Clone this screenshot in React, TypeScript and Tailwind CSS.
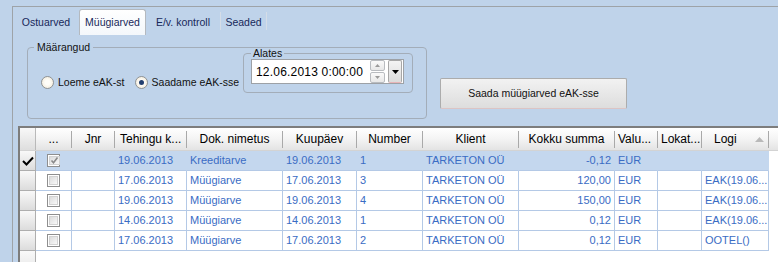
import React from "react";

interface Col {
  key: string;
  title: string;
  w: number;
  head: "center" | "left";
  align: "left" | "right" | "center";
}

const cols: Col[] = [
  { key: "chk", title: "...", w: 36, head: "center", align: "center" },
  { key: "jnr", title: "Jnr", w: 43, head: "center", align: "left" },
  { key: "teh", title: "Tehingu k...", w: 72, head: "left", align: "left" },
  { key: "dok", title: "Dok. nimetus", w: 96, head: "center", align: "left" },
  { key: "kp", title: "Kuupäev", w: 74, head: "center", align: "left" },
  { key: "nr", title: "Number", w: 66, head: "center", align: "left" },
  { key: "kl", title: "Klient", w: 96, head: "center", align: "left" },
  { key: "sum", title: "Kokku summa", w: 96, head: "center", align: "right" },
  { key: "val", title: "Valu...", w: 43, head: "left", align: "left" },
  { key: "lok", title: "Lokat...", w: 44, head: "left", align: "left" },
  { key: "logi", title: "Logi", w: 67, head: "left", align: "left" },
];

type Row = Record<string, string> & { sel?: string };

const rows: Row[] = [
  { sel: "1", jnr: "", teh: "19.06.2013", dok: "Kreeditarve", kp: "19.06.2013", nr: "1", kl: "TARKETON OÜ", sum: "-0,12", val: "EUR", lok: "", logi: "" },
  { jnr: "", teh: "17.06.2013", dok: "Müügiarve", kp: "17.06.2013", nr: "3", kl: "TARKETON OÜ", sum: "120,00", val: "EUR", lok: "", logi: "EAK(19.06..." },
  { jnr: "", teh: "19.06.2013", dok: "Müügiarve", kp: "19.06.2013", nr: "4", kl: "TARKETON OÜ", sum: "150,00", val: "EUR", lok: "", logi: "EAK(19.06..." },
  { jnr: "", teh: "14.06.2013", dok: "Müügiarve", kp: "14.06.2013", nr: "1", kl: "TARKETON OÜ", sum: "0,12", val: "EUR", lok: "", logi: "EAK(19.06..." },
  { jnr: "", teh: "17.06.2013", dok: "Müügiarve", kp: "17.06.2013", nr: "2", kl: "TARKETON OÜ", sum: "0,12", val: "EUR", lok: "", logi: "OOTEL()" },
];

function Radio({ checked, label }: { checked?: boolean; label: string }) {
  return (
    <div className="flex items-center">
      <span className="w-[13px] h-[13px] rounded-full border border-[#8f9294] bg-[radial-gradient(circle,#fffdf8_30%,#efe6d2_100%)] flex items-center justify-center">
        {checked && <span className="w-[5px] h-[5px] rounded-full bg-[#233f6f]" />}
      </span>
      <span className="ml-[4px] text-[10.5px] leading-[13px] text-[#111]">{label}</span>
    </div>
  );
}

function CheckBox({ checked }: { checked?: boolean }) {
  return (
    <span className="w-[13px] h-[13px] border border-[#8e8e8e] bg-white p-px flex">
      <span className="flex-1 border border-[#d2d2d2] bg-linear-to-br from-[#dcdcdc] to-[#f8f8f8] flex items-center justify-center">
        {checked && (
          <svg width="9" height="9" viewBox="0 0 9 9">
            <path d="M1.5 4.5 L3.5 6.8 L7.5 1.5" stroke="#8a8a8a" strokeWidth="1.6" fill="none" />
          </svg>
        )}
      </span>
    </span>
  );
}

export default function App() {
  return (
    <div className="w-[778px] h-[262px] overflow-hidden bg-[#bfd3ea] pt-[6px] pl-[12px] font-['Liberation_Sans',Arial,sans-serif]">
      <div className="h-full flex flex-col border-l border-t border-[#9ea3a8]">
        {/* Tab strip */}
        <div className="flex h-[28px] flex-none text-[10.5px] text-[#17285a]">
          <div className="w-[66px] flex items-center justify-center pt-[3px]">Ostuarved</div>
          <div className="w-[67px] mt-[2px] h-[26px] border border-b-0 border-[#b4b9bf] rounded-t-[3px] bg-linear-to-b from-white to-[#f3f7fb] flex items-center justify-center pt-px">
            Müügiarved
          </div>
          <div className="w-[75px] flex items-center justify-center pt-[3px] border-r border-[#d5dde7] my-[5px]">E/v. kontroll</div>
          <div className="w-[46px] flex items-center justify-center pt-[3px] border-r border-[#d5dde7] my-[5px]">Seaded</div>
        </div>

        {/* Tab page */}
        <div className="flex-1 flex flex-col min-h-0">
          <div className="flex items-start pt-[12px] pl-[14px] flex-none">
            <div className="relative w-[400px] h-[72px] border border-[#a3adb9] rounded-[4px] flex items-start pl-[13px]">
              <span className="absolute -top-[7px] left-[6px] px-[3px] bg-[#bfd3ea] text-[10.5px] leading-[12px] text-[#111]">
                Määrangud
              </span>
              <div className="w-[202px] flex-none mt-[28px] flex items-center gap-[10px]">
                <Radio label="Loeme eAK-st" />
                <Radio checked label="Saadame eAK-sse" />
              </div>
              <div className="relative mt-[5px] w-[170px] h-[40px] border border-[#a3adb9] rounded-[4px] pl-[7px] pt-[5px]">
                <span className="absolute -top-[6px] left-[7px] px-[2px] bg-[#bfd3ea] text-[10.5px] leading-[11px] text-[#111]">
                  Alates
                </span>
                <div className="w-[153px] h-[25px] bg-white border border-[#9da1a6] flex items-center">
                  <span className="pl-[4px] flex-1 text-[12px] text-black tracking-[0.2px]">12.06.2013 0:00:00</span>
                  <div className="flex flex-col gap-px mr-[3px]">
                    <span className="w-[15px] h-[11px] border border-[#b9bcc0] rounded-[2px] bg-linear-to-b from-[#fafafa] to-[#e8e8e8] flex items-center justify-center">
                      <svg width="5" height="3" viewBox="0 0 5 3"><path d="M0 3 L2.5 0 L5 3Z" fill="#9a9a9a" /></svg>
                    </span>
                    <span className="w-[15px] h-[11px] border border-[#b9bcc0] rounded-[2px] bg-linear-to-b from-[#fafafa] to-[#e8e8e8] flex items-center justify-center">
                      <svg width="5" height="3" viewBox="0 0 5 3"><path d="M0 0 L2.5 3 L5 0Z" fill="#9a9a9a" /></svg>
                    </span>
                  </div>
                  <span className="w-[14px] h-[23px] mr-px border border-[#a7a7a7] border-b-[#e8b4b8] rounded-[2px] bg-linear-to-b from-[#f4f4f4] to-[#dcdcdc] flex items-center justify-center">
                    <svg width="7" height="4" viewBox="0 0 7 4"><path d="M0 0 L3.5 4 L7 0Z" fill="#000" /></svg>
                  </span>
                </div>
              </div>
            </div>
            <button className="mt-[31px] ml-[13px] w-[187px] h-[31px] border border-[#acacac] border-b-[#dcc4c4] rounded-[2px] bg-linear-to-b from-[#f2f2f2] to-[#dddddd] text-[10.5px] text-[#111]">
              Saada müügiarved eAK-sse
            </button>
          </div>

          {/* Grid */}
          <div className="mt-[7px] ml-[5px] flex-1 bg-white border-l-2 border-t-2 border-[#7d7d7d] overflow-hidden">
            <div className="flex h-[23px] bg-linear-to-b from-white via-[#f4f4f4] to-[#e3e3e3] border-b border-[#d3d3d3] text-[12px] text-black">
              <div className="w-[16px] flex-none border-r border-[#b9b9b9] bg-linear-to-b from-[#f8f8f8] to-[#dedede]" />
              {cols.map((c) => (
                <div key={c.key} className="flex-none flex items-center" style={{ width: c.w }}>
                  <span className={`flex-1 whitespace-nowrap overflow-hidden ${c.head === "center" ? "text-center" : "pl-[3px]"} ${c.key === "teh" ? "pl-[5px]" : ""} ${c.key === "logi" ? "pl-[12px]" : ""}`}>
                    {c.title}
                  </span>
                  {c.key === "logi" && (
                    <svg width="9" height="5" viewBox="0 0 9 5" className="mr-[4px]">
                      <path d="M0 5 L4.5 0 L9 5Z" fill="#b9b9b9" />
                    </svg>
                  )}
                  <span className="w-px h-[17px] bg-[#a9a9a9] flex-none" />
                </div>
              ))}
            </div>
            {rows.map((r, i) => (
              <div key={i} className="flex h-[20px] text-[11px] text-[#3a6cc4]">
                <div className="w-[16px] flex-none border-r border-b border-[#aeaeae] bg-linear-to-b from-[#f9f9f9] to-[#dcdcdc] flex items-center justify-center">
                  {r.sel && (
                    <svg width="12" height="10" viewBox="0 0 12 10">
                      <path d="M1 5 L4.5 8.5 L11 1.5" stroke="#000" strokeWidth="2" fill="none" />
                    </svg>
                  )}
                </div>
                <div className={`flex ${r.sel ? "bg-[#c4d7ee]" : ""}`}>
                  {cols.map((c) => (
                    <div
                      key={c.key}
                      className={`flex-none flex items-center border-b border-r whitespace-nowrap overflow-hidden ${r.sel ? "border-r-[#c4d7ee] border-b-[#b4c9e6]" : "border-[#b4c9e6]"} ${c.align === "right" ? "justify-end pr-[3px]" : c.align === "center" ? "justify-center" : "pl-[3px]"} ${c.key === "teh" ? "pl-[2px]" : ""}`}
                      style={{ width: c.w }}
                    >
                      {c.key === "chk" ? <CheckBox checked={!!r.sel} /> : r[c.key]}
                    </div>
                  ))}
                </div>
              </div>
            ))}
            <div className="flex h-[20px]">
              <div className="w-[16px] flex-none border-r border-[#aeaeae] bg-linear-to-b from-[#f9f9f9] to-[#e6e6e6]" />
            </div>
          </div>
        </div>
      </div>
    </div>
  );
}
